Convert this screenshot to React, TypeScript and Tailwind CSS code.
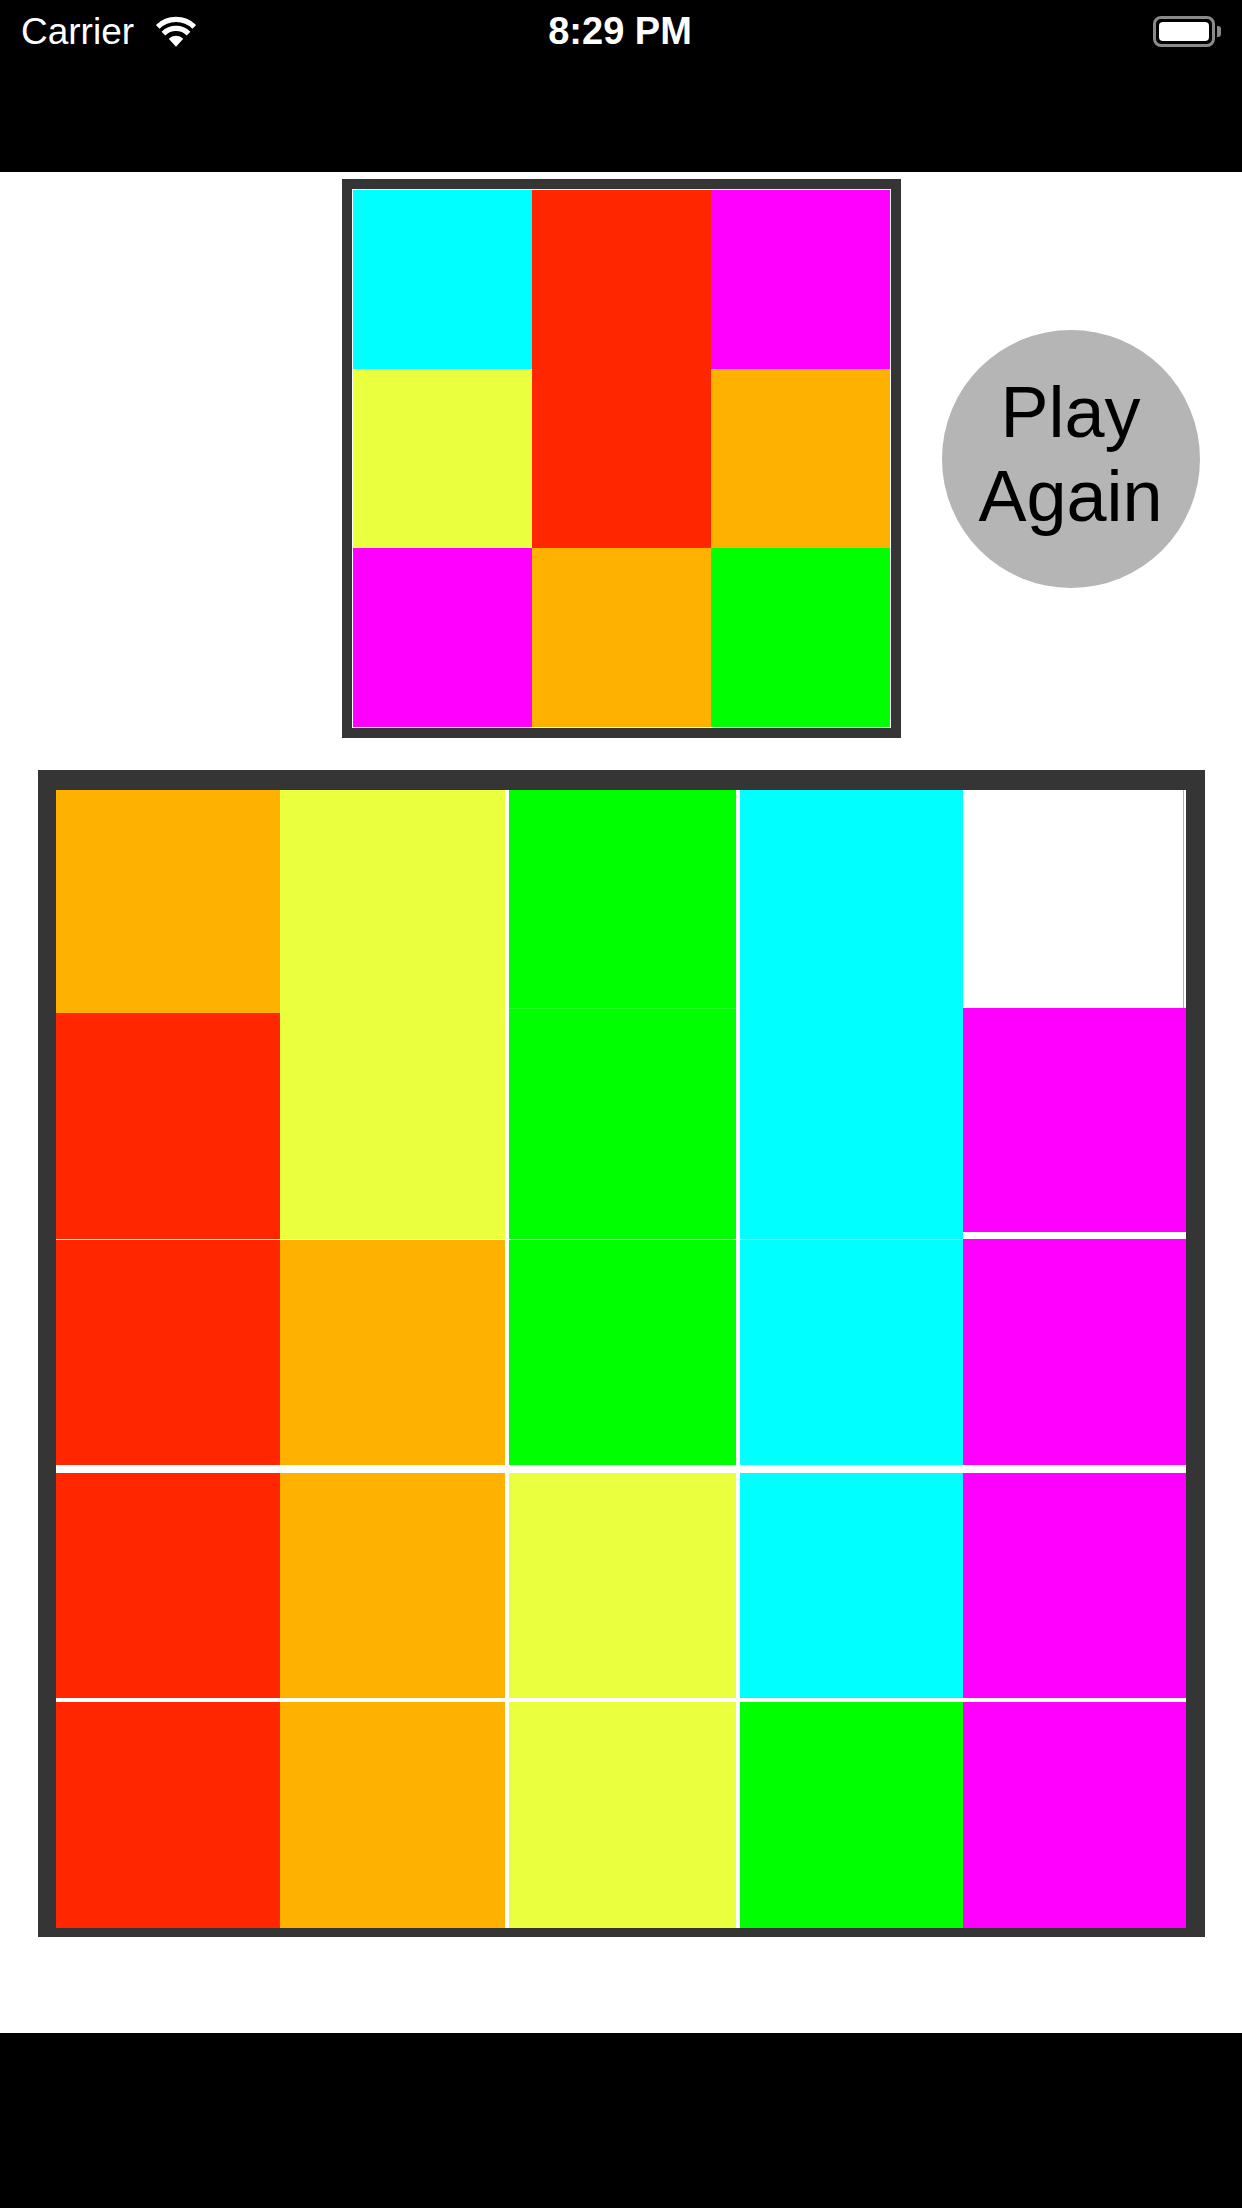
import React from 'react';

type Seg = { cls: string };

const RED = 'bg-[#FF2600]';
const ORANGE = 'bg-[#FFB100]';
const YELLOW = 'bg-[#EAFF3D]';
const GREEN = 'bg-[#00FF00]';
const CYAN = 'bg-[#00FFFF]';
const MAGENTA = 'bg-[#FF00FF]';

const target = [CYAN, RED, MAGENTA, YELLOW, RED, ORANGE, MAGENTA, ORANGE, GREEN];

// each column of the big board, top to bottom; margins are the white seams left by sliding tiles
const columns: { w: string; segs: Seg[] }[] = [
  {
    w: 'w-[224px]',
    segs: [
      { cls: `h-[223px] ${ORANGE}` },
      { cls: `h-[226px] ${RED}` },
      { cls: `h-[225px] mt-[1px] ${RED}` },
      { cls: `h-[225px] mt-[8px] ${RED}` },
      { cls: `h-[226px] mt-[4px] ${RED}` },
    ],
  },
  {
    w: 'w-[225px] mr-[4px]',
    segs: [
      { cls: `h-[449px] ${YELLOW}` },
      { cls: `h-[225px] mt-[1px] ${ORANGE}` },
      { cls: `h-[225px] mt-[8px] ${ORANGE}` },
      { cls: `h-[226px] mt-[4px] ${ORANGE}` },
    ],
  },
  {
    w: 'w-[227px] mr-[4px]',
    segs: [
      { cls: `h-[219px] ${GREEN} border-b border-[#22ff22]` },
      { cls: `h-[230px] ${GREEN}` },
      { cls: `h-[225px] mt-[1px] ${GREEN}` },
      { cls: `h-[225px] mt-[8px] ${YELLOW}` },
      { cls: `h-[226px] mt-[4px] ${YELLOW}` },
    ],
  },
  {
    w: 'w-[223px]',
    segs: [
      { cls: `h-[449px] ${CYAN}` },
      { cls: `h-[225px] mt-[1px] ${CYAN}` },
      { cls: `h-[225px] mt-[8px] ${CYAN}` },
      { cls: `h-[226px] mt-[4px] ${GREEN}` },
    ],
  },
  {
    w: 'w-[223px]',
    segs: [
      { cls: 'h-[218px] bg-white mr-[2px] border-r border-[#b0b0b0]' },
      { cls: `h-[224px] ${MAGENTA}` },
      { cls: `h-[226px] mt-[7px] ${MAGENTA}` },
      { cls: `h-[225px] mt-[8px] ${MAGENTA}` },
      { cls: `h-[226px] mt-[4px] ${MAGENTA}` },
    ],
  },
];

const Wifi = () => (
  <svg width="46" height="34" viewBox="0 0 44 32" fill="none">
    <path d="M22 31 L15 23.5 A10 10 0 0 1 29 23.5 Z" fill="white" />
    <path d="M10 18.5 A17 17 0 0 1 34 18.5" stroke="white" strokeWidth="5" />
    <path d="M4.5 12 A25 25 0 0 1 39.5 12" stroke="white" strokeWidth="5" />
  </svg>
);

const Battery = () => (
  <div className="flex items-center">
    <div className="w-[62px] h-[31px] rounded-[8px] border-[3px] border-[#8a8a8a] p-[3px]">
      <div className="w-full h-full rounded-[4px] bg-white" />
    </div>
    <div className="w-[4px] h-[11px] rounded-r-[3px] bg-[#8a8a8a] ml-[2px]" />
  </div>
);

export default function App() {
  return (
    <div className="w-[1242px] h-[2208px] flex flex-col bg-white font-['Liberation_Sans',Arial,sans-serif]">
      <div className="h-[172px] bg-black shrink-0">
        <div className="relative h-[62px] flex items-center px-[21px]">
          <span className="text-white text-[37px] leading-none">Carrier</span>
          <span className="ml-[19px]">
            <Wifi />
          </span>
          <span className="flex-1 text-center text-white text-[38px] font-semibold leading-none pr-[18px]">8:29 PM</span>
          <span className="w-[162px] flex justify-end">
            <Battery />
          </span>
        </div>
      </div>

      <div className="flex-1">
        <div className="grid grid-cols-[1fr_auto_1fr] items-center mt-[7px]">
          <div />
          <div className="border-[10px] border-[#353535] bg-white p-[1px]">
            <div className="grid grid-cols-3 w-[537px] h-[537px]">
              {target.map((c, i) => (
                <div key={i} className={c} />
              ))}
            </div>
          </div>
          <div className="ml-[41px]">
            <button className="w-[258px] h-[258px] rounded-full bg-[#B5B5B5] flex flex-col items-center justify-center pb-[10px] text-black text-[72px] leading-[84px]">
              <span>Play</span>
              <span>Again</span>
            </button>
          </div>
        </div>

        <div className="mt-[32px] mx-auto w-[1167px] border-[#353535] border-l-[18px] border-r-[19px] border-t-[20px] border-b-[9px] bg-white">
          <div className="flex h-[1138px]">
            {columns.map((col, i) => (
              <div key={i} className={`${col.w} flex flex-col`}>
                {col.segs.map((s, j) => (
                  <div key={j} className={s.cls} />
                ))}
              </div>
            ))}
          </div>
        </div>
      </div>

      <div className="h-[175px] bg-black shrink-0" />
    </div>
  );
}
